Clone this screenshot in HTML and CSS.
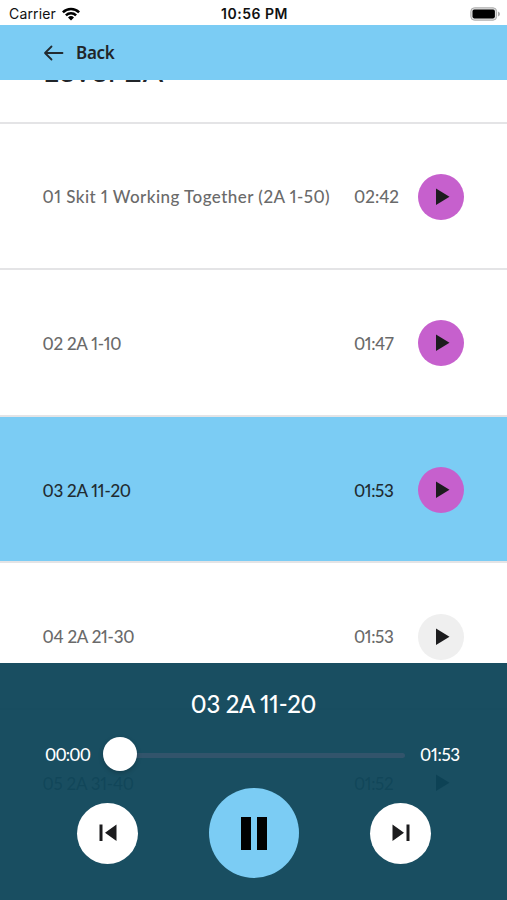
FILE: index.html
```
<!DOCTYPE html>
<html lang="en">
    <head>
        <meta charset="UTF-8">
        <title>Audio Player</title>
        <link rel="stylesheet" href="styles.css">
    </head>
    <body>
        <svg class="symbols">
            <symbol id="play" viewBox="0 0 14 18"><path d="M0 0.5V17L13.5 8.75Z" fill="currentColor"/></symbol>
            <symbol id="skip" viewBox="0 0 18 18"><path d="M0.5 0.5V17L12 8.75ZM14.5 0.5H17.5V17H14.5Z" fill="currentColor"/></symbol>
        </svg>
        <div class="screen">
            <div class="status">
                <div class="carrier"><span>Carrier</span>
                    <svg class="wifi" viewBox="0 0 18 14"><path d="M0 4.4A12.8 12.8 0 0 1 18 4.4L16.2 6.3A10.2 10.2 0 0 0 1.8 6.3ZM3 7.5A8.6 8.6 0 0 1 15 7.5L13.2 9.3A6 6 0 0 0 4.8 9.3ZM6 10.5A4.4 4.4 0 0 1 12 10.5L9 13.6Z"/></svg>
                </div>
                <div class="clock">10:56 PM</div>
                <svg class="battery" viewBox="0 0 30 14"><rect x="0.8" y="0.8" width="25.8" height="12.4" rx="3.6" fill="#ddd" stroke="#aaa"/><rect x="2.5" y="2.6" width="22.4" height="8.8" rx="1.8"/><path d="M28 4.5Q30 5.2 30 7T28 9.5Z" fill="#aaa"/></svg>
            </div>
            <div class="header">
                <svg class="arrow" viewBox="0 0 20 16"><path d="M19 8H1.5M8 1.5L1.5 8L8 14.5"/></svg>
                <span class="back">Back</span>
            </div>
            <div class="title"><h1>Level 2A</h1></div>
            <div class="list">
                <div class="track">
                    <span class="name long">01 Skit 1 Working Together (2A 1-50)</span>
                    <span class="time wide">02:42</span>
                    <button class="play"><svg><use href="#play"/></svg></button>
                </div>
                <div class="track">
                    <span class="name">02 2A 1-10</span>
                    <span class="time">01:47</span>
                    <button class="play"><svg><use href="#play"/></svg></button>
                </div>
                <div class="track active">
                    <span class="name">03 2A 11-20</span>
                    <span class="time">01:53</span>
                    <button class="play"><svg><use href="#play"/></svg></button>
                </div>
                <div class="track">
                    <span class="name">04 2A 21-30</span>
                    <span class="time">01:53</span>
                    <button class="play idle"><svg><use href="#play"/></svg></button>
                </div>
                <div class="track">
                    <span class="name">05 2A 31-40</span>
                    <span class="time">01:52</span>
                    <button class="play idle"><svg><use href="#play"/></svg></button>
                </div>
            </div>
            <div class="player">
                <div class="now">03 2A 11-20</div>
                <div class="seek">
                    <span class="elapsed">00:00</span>
                    <div class="bar"><div class="thumb"></div></div>
                    <span class="total">01:53</span>
                </div>
                <div class="controls">
                    <button class="step"><svg class="prev"><use href="#skip"/></svg></button>
                    <button class="pause"><i></i><i></i></button>
                    <button class="step"><svg><use href="#skip"/></svg></button>
                </div>
            </div>
        </div>
    </body>
</html>
```
FILE: styles.css
```
* {
    box-sizing: border-box;
}
body {
    margin: 0;
    font-family: Lato, sans-serif;
    font-weight: 500;
    font-variant-numeric: proportional-nums;
    color: #212529;
}
button {
    border: 0;
    padding: 0;
    border-radius: 50%;
    display: flex;
    align-items: center;
    justify-content: center;
    flex: none;
    color: #1c1c1e;
}
.symbols {
    display: none;
}
.screen {
    position: relative;
    height: 900px;
    overflow: hidden;
    background: #fff;
}
.status {
    height: 25px;
    display: grid;
    grid-template-columns: 1fr auto 1fr;
    align-items: center;
    padding: 2px 7px 0 9px;
    font-family: Inter, sans-serif;
    font-size: 14px;
    color: #111;
}
.carrier {
    display: flex;
    align-items: center;
    gap: 6px;
    font-weight: 400;
    letter-spacing: 0.15px;
}
.wifi {
    width: 18px;
    height: 14px;
}
.clock {
    font-weight: 600;
    letter-spacing: 0.5px;
}
.battery {
    width: 30px;
    height: 14px;
    justify-self: end;
}
.header {
    height: 55px;
    display: flex;
    align-items: center;
    padding-left: 43px;
    background: #7bccf4;
}
.arrow {
    width: 21px;
    height: 16px;
    margin-right: 12px;
    fill: none;
    stroke: #222b31;
    stroke-width: 1.8;
    stroke-linecap: round;
    stroke-linejoin: round;
}
.back {
    font-family: "Noto Sans", sans-serif;
    font-weight: 600;
    font-size: 17px;
    letter-spacing: -0.3px;
}
.title {
    height: 41.6px;
    overflow: hidden;
    padding-left: 43px;
}
h1 {
    margin: -27px 0 0;
    font-size: 30px;
    line-height: 34px;
    font-weight: 500;
    letter-spacing: 1px;
}
.track {
    height: 146.6px;
    display: flex;
    align-items: center;
    padding: 2px 43px 0 42.5px;
    border-top: 2px solid #e4e4e6;
    font-size: 17px;
    color: #6a6a6a;
}
.name {
    flex: 1;
    white-space: nowrap;
    letter-spacing: -0.25px;
}
.long {
    letter-spacing: 0.46px;
}
.time {
    width: 64px;
    letter-spacing: -0.4px;
}
.wide {
    letter-spacing: 0;
}
.active {
    background: #7bccf4;
    color: #212b31;
}
.play {
    width: 46px;
    height: 46px;
    background: #c660cd;
}
.play svg {
    width: 14px;
    height: 18px;
    margin-left: 3px;
}
.idle {
    background: #efefef;
}
.player {
    position: absolute;
    left: 0;
    right: 0;
    bottom: 0;
    height: 237px;
    background: rgba(13, 69, 89, 0.95);
    color: #fff;
}
.now {
    padding-top: 26px;
    line-height: 30px;
    font-size: 24px;
    text-align: center;
    letter-spacing: -0.3px;
}
.seek {
    height: 34px;
    margin-top: 18px;
    display: flex;
    align-items: center;
    padding: 0 47px 0 45px;
    font-size: 17px;
}
.elapsed {
    width: 58px;
    flex: none;
    letter-spacing: -0.8px;
}
.bar {
    width: 302px;
    flex: none;
    height: 5px;
    display: flex;
    align-items: center;
    border-radius: 3px;
    background: #32546b;
    margin-top: 3px;
}
.thumb {
    width: 34px;
    height: 34px;
    flex: none;
    border-radius: 50%;
    background: #fff;
    margin-top: -3px;
    box-shadow: 0 2px 5px rgba(0, 0, 0, 0.2);
}
.total {
    margin-left: 15px;
    letter-spacing: -0.3px;
}
.controls {
    display: flex;
    align-items: center;
    justify-content: space-between;
    padding: 0 76px 0 77px;
    margin-top: 17px;
}
.step {
    width: 61px;
    height: 61px;
    background: #fff;
}
.step svg {
    width: 18px;
    height: 18px;
}
.prev {
    transform: scaleX(-1);
}
.pause {
    width: 90px;
    height: 90px;
    background: #7bccf4;
    gap: 6px;
}
.pause i {
    width: 10px;
    height: 33px;
    background: #000;
}
```
